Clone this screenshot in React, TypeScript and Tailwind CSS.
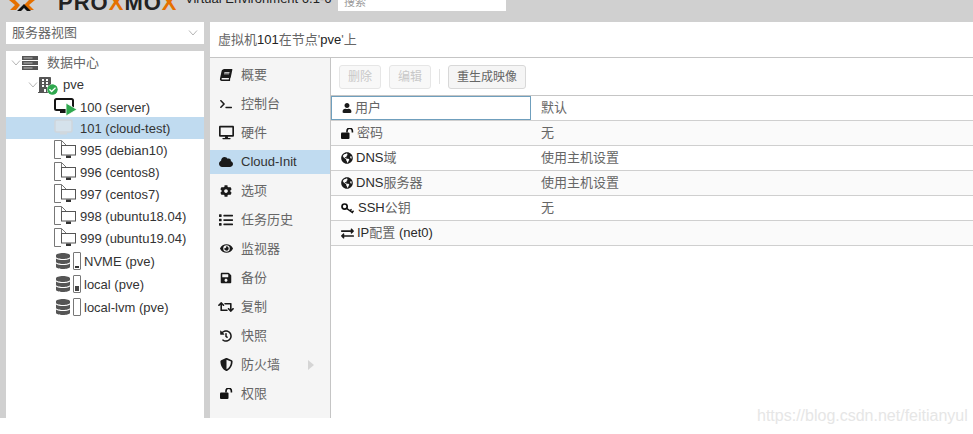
import React from "react";
import {
  FaBook, FaTerminal, FaDesktop, FaCloud, FaCog, FaList, FaEye, FaSave, FaRetweet, FaHistory,
  FaShieldAlt, FaGlobeAmericas, FaUser, FaExchangeAlt, FaDatabase, FaBuilding,
  FaCheckCircle,
} from "react-icons/fa";

const Chevron = () => (
  <svg width="10" height="6" viewBox="0 0 10 6" fill="none" stroke="#b5b5b5" strokeWidth="1" className="shrink-0">
    <path d="M1 .5 5 5 9 .5" />
  </svg>
);

const Unlock = ({ w = 13 }: { w?: number }) => (
  <svg width={w} height={(w * 11) / 13} viewBox="0 0 13 11" className="shrink-0">
    <rect x="0" y="4.5" width="8.5" height="6.5" rx="1" fill="#111" />
    <path d="M6 4.5V3a2.7 2.7 0 0 1 5.4 0V4.5" fill="none" stroke="#111" strokeWidth="1.6" />
  </svg>
);

const Key = () => (
  <svg width="13" height="11" viewBox="0 0 13 11" className="shrink-0">
    <circle cx="3.6" cy="3.6" r="2.6" fill="none" stroke="#111" strokeWidth="1.7" />
    <path d="M5.6 5.4 12 10M9 7.8 10.6 6.4M11 9.2 12.6 7.8" fill="none" stroke="#111" strokeWidth="1.5" />
  </svg>
);

const Template = () => (
  <svg width="23" height="20" viewBox="0 0 23 20" fill="none" className="shrink-0">
    <path d="M.5 18.5V.5H7.5L12.5 5.5M.5 18.5H7M7.5 .5V5.5H12.5" stroke="#777" strokeWidth="1" />
    <rect x="7.5" y="5.5" width="14" height="9.5" fill="#fff" stroke="#555" strokeWidth="1" />
    <rect x="12" y="15.5" width="5" height="2.5" fill="#333" />
  </svg>
);

const Running = () => (
  <svg width="23" height="20" viewBox="0 0 23 20" className="shrink-0">
    <rect x="1" y="2" width="18" height="11" rx="1.5" fill="#fff" stroke="#151515" strokeWidth="2" />
    <rect x="6" y="13" width="8" height="3" fill="#151515" />
    <path d="M12 6 23 12.5 12 19Z" fill="#2fa84f" stroke="#fff" strokeWidth=".8" />
  </svg>
);

const Stopped = () => (
  <svg width="23" height="20" viewBox="0 0 23 20" className="shrink-0">
    <rect x="1" y="2" width="17" height="12" rx="1.5" fill="#d5e2ec" stroke="#cfd6dc" strokeWidth="1.5" />
    <rect x="6" y="14" width="7" height="2.5" fill="#d0d8de" />
  </svg>
);

const Server = () => (
  <svg width="16" height="14" viewBox="0 0 16 14" className="shrink-0">
    {[0, 5, 10].map((y) => (
      <g key={y}>
        <rect x="0" y={y} width="16" height="4" fill="#555" />
        <rect x="1.5" y={y + 1.5} width="9" height="1" fill="#bbb" />
      </g>
    ))}
  </svg>
);

const Storage = ({ level }: { level: "low" | "mid" | "none" }) => (
  <div className="flex items-center gap-[2px] shrink-0 ml-[1px]">
    <FaDatabase size={16} color="#555" />
    <div className="w-[8px] h-[18px] border border-[#777] rounded-[1px] flex flex-col justify-end p-[1px]">
      {level === "low" && <div className="h-[2px] bg-[#333]" />}
      {level === "mid" && <div className="h-[5px] bg-[#444]" />}
    </div>
  </div>
);

const vms = [
  { t: "100 (server)", h: "h-[21px]", i: <Running />, sel: false },
  { t: "101 (cloud-test)", h: "h-[22px]", i: <Stopped />, sel: true },
  { t: "995 (debian10)", h: "h-[22px]", i: <Template />, sel: false },
  { t: "996 (centos8)", h: "h-[22px]", i: <Template />, sel: false },
  { t: "997 (centos7)", h: "h-[22px]", i: <Template />, sel: false },
  { t: "998 (ubuntu18.04)", h: "h-[22px]", i: <Template />, sel: false },
  { t: "999 (ubuntu19.04)", h: "h-[22px]", i: <Template />, sel: false },
  { t: "NVME (pve)", h: "h-[23px]", i: <Storage level="low" />, sel: false },
  { t: "local (pve)", h: "h-[23px]", i: <Storage level="mid" />, sel: false },
  { t: "local-lvm (pve)", h: "h-[23px]", i: <Storage level="none" />, sel: false },
];

const nav = [
  { t: "概要", i: <FaBook size={12} className="-skew-x-12" /> },
  { t: "控制台", i: <FaTerminal size={12} /> },
  { t: "硬件", i: <FaDesktop size={15} /> },
  { t: "Cloud-Init", i: <FaCloud size={14} />, sel: true },
  { t: "选项", i: <FaCog size={12} /> },
  { t: "任务历史", i: <FaList size={14} /> },
  { t: "监视器", i: <FaEye size={13} /> },
  { t: "备份", i: <FaSave size={12} /> },
  { t: "复制", i: <FaRetweet size={16} /> },
  { t: "快照", i: <FaHistory size={12} /> },
  { t: "防火墙", i: <FaShieldAlt size={13} />, arrow: true },
  { t: "权限", i: <Unlock w={13} /> },
];

const rows = [
  { k: "用户", v: "默认", i: <FaUser size={10} />, g: "gap-0", focus: true },
  { k: "密码", v: "无", i: <Unlock />, g: "gap-[3px]" },
  { k: "DNS域", v: "使用主机设置", i: <FaGlobeAmericas size={12} />, g: "gap-[2px]" },
  { k: "DNS服务器", v: "使用主机设置", i: <FaGlobeAmericas size={12} />, g: "gap-[2px]" },
  { k: "SSH公钥", v: "无", i: <Key />, g: "gap-[4px]" },
  { k: "IP配置 (net0)", v: "", i: <FaExchangeAlt size={13} />, g: "gap-[3px]" },
];

const Mixed = ({ text }: { text: string }) => (
  <>
    {text.split(/([A-Za-z0-9 ().-]+)/).map((p, i) => (
      <span key={i} className={i % 2 ? "text-[#2a2a2a]" : "text-[#666]"}>{p}</span>
    ))}
  </>
);

export default function App() {
  return (
    <div className="relative w-[973px] h-[434px] overflow-hidden bg-white text-[13px] text-[#444] font-['Liberation_Sans','Noto_Sans_CJK_SC',sans-serif]">
      <div className="h-[418px] bg-[#d0d0d0] flex flex-col">
        <header className="h-[22px] flex items-start overflow-hidden shrink-0">
          <svg width="30" height="11" viewBox="0 0 30 11" className="ml-[9px] shrink-0">
            <path d="M0 0h6l5 5-4 5H1l5-5z" fill="#e57000" />
            <path d="M26 0h-6l-5 5 4 5h6l-5-5z" fill="#e57000" />
            <path d="M8 11 15 4l7 7h-4l-3-3-3 3z" fill="#111" />
          </svg>
          <div className="ml-[19px] -mt-[7px] w-[122px] text-[22px] leading-[20px] font-bold tracking-[1px] text-[#222] whitespace-nowrap">
            PRO<span className="text-[#e57000]">X</span>MO<span className="text-[#e57000]">X</span>
          </div>
          <div className="ml-[5px] -mt-[8px] w-[153px] text-[13px] leading-[14px] text-[#222] whitespace-nowrap overflow-hidden">
            Virtual Environment 6.1-6
          </div>
          <div className="w-[168px] h-[11px] bg-white overflow-hidden pl-[6px] text-[11px] leading-[5px] text-[#999]">搜索</div>
        </header>
        <div className="flex-1 min-h-0 flex pl-[6px] gap-[6px]">
          <aside className="w-[198px] flex flex-col gap-[7px] shrink-0">
            <div className="h-[22px] bg-white flex items-center justify-between pl-[6px] pr-[6px] text-[#666]">
              <span>服务器视图</span>
              <Chevron />
            </div>
            <div className="flex-1 bg-white">
              <div className="h-[23px] flex items-center pl-[5px]">
                <Chevron />
                <div className="ml-[1px]"><Server /></div>
                <span className="ml-[9px] text-[#666]">数据中心</span>
              </div>
              <div className="h-[22px] flex items-center pl-[22px]">
                <Chevron />
                <div className="relative w-[18px] h-[17px] -ml-px mr-[8px]">
                  <FaBuilding size={16} color="#555" />
                  <FaCheckCircle size={11} color="#2fa84f" className="absolute left-[10px] top-[7px] bg-white rounded-full" />
                </div>
                <span className="text-[#333]">pve</span>
              </div>
              {vms.map((r) => (
                <div key={r.t} className={`${r.h} flex items-center pl-[48px] text-[#333] ${r.sel ? "bg-[#c0dbf0]" : ""}`}>
                  {r.i}
                  <span className="ml-[3px] pt-[2px] whitespace-nowrap">{r.t}</span>
                </div>
              ))}
            </div>
          </aside>
          <main className="flex-1 min-w-0 flex flex-col">
            <div className="h-[36px] shrink-0 bg-white border-b border-[#c5c5c5] flex items-center pl-[8px] text-[#666]">
              虚拟机<span className="text-[#222]">101</span>在节点'<span className="text-[#222]">pve</span>'上
            </div>
            <div className="flex-1 min-h-0 flex">
              <nav className="w-[121px] shrink-0 bg-[#f5f5f5] border-r border-[#c5c5c5] pt-[2px]">
                {nav.map((n) => (
                  <div key={n.t} className="h-[29px] flex items-center text-[#666]">
                    <div className={`w-full h-[24px] flex items-center ${n.sel ? "bg-[#c0dbf0] text-[#333]" : ""}`}>
                      <span className="w-[31px] shrink-0 flex justify-center pl-px text-[#1a1a1a]">{n.i}</span>
                      <span className="flex-1">{n.t}</span>
                      {n.arrow && <span className="mr-[16px] w-0 h-0 border-y-[5px] border-y-transparent border-l-[6px] border-l-[#d5d5d5]" />}
                    </div>
                  </div>
                ))}
              </nav>
              <section className="flex-1 min-w-0 bg-white">
                <div className="h-[38px] border-b border-[#c5c5c5] flex items-center pl-[8px] gap-[8px] text-[12px]">
                  <button className="w-[42px] h-[24px] rounded-[3px] border border-[#e6e6e6] bg-[#f8f8f8] text-[#c8c8c8]">删除</button>
                  <button className="w-[42px] h-[24px] rounded-[3px] border border-[#e6e6e6] bg-[#f8f8f8] text-[#c8c8c8]">编辑</button>
                  <div className="w-px h-[15px] bg-[#e3e3e3]" />
                  <button className="w-[78px] h-[24px] rounded-[3px] border border-[#d8d8d8] bg-[#f5f5f5] text-[#666]">重生成映像</button>
                </div>
                {rows.map((r, idx) => (
                  <div key={r.k} className={`h-[25px] flex border-b border-[#cfcfcf] ${idx % 2 ? "bg-[#fafafa]" : "bg-white"}`}>
                    <div className={`w-[200px] shrink-0 flex items-center pl-[10px] ${r.g} ${r.focus ? "border border-[#6f9fbd]" : ""}`}>
                      <span className="text-[#1a1a1a] w-[13px] flex justify-start shrink-0">{r.i}</span>
                      <span className="whitespace-nowrap"><Mixed text={r.k} /></span>
                    </div>
                    <div className="flex-1 flex items-center pl-[10px] text-[#666]">{r.v}</div>
                  </div>
                ))}
              </section>
            </div>
          </main>
        </div>
      </div>
      <div className="absolute left-[757px] top-[405px] text-[16px] leading-[22px] text-[#e6e6e6] whitespace-nowrap">
        https://blog.csdn.net/feitianyul
      </div>
    </div>
  );
}
